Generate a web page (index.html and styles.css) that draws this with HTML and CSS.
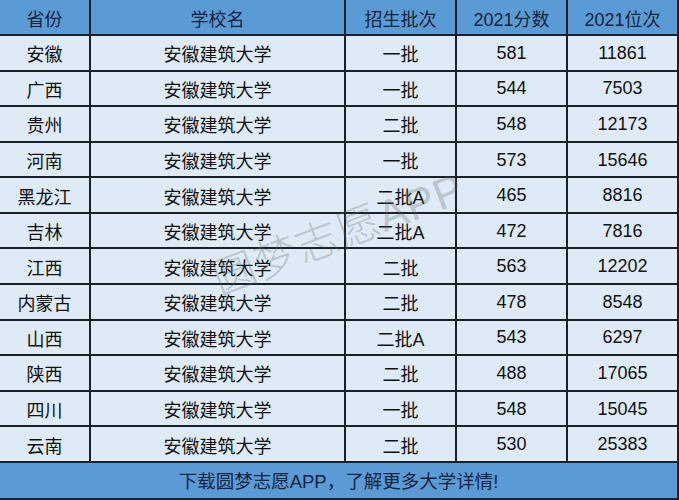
FILE: index.html
```html
<!DOCTYPE html>
<html lang="zh-CN">
<head>
<meta charset="utf-8">
<title>安徽建筑大学 2021 录取分数</title>
<link rel="stylesheet" href="styles.css">
</head>
<body>
<div class="sheet">
  <div class="cell head">省份</div>
  <div class="cell head">学校名</div>
  <div class="cell head">招生批次</div>
  <div class="cell head">2021分数</div>
  <div class="cell head">2021位次</div>

  <div class="cell">安徽</div><div class="cell">安徽建筑大学</div><div class="cell">一批</div><div class="cell">581</div><div class="cell">11861</div>
  <div class="cell">广西</div><div class="cell">安徽建筑大学</div><div class="cell">一批</div><div class="cell">544</div><div class="cell">7503</div>
  <div class="cell">贵州</div><div class="cell">安徽建筑大学</div><div class="cell">二批</div><div class="cell">548</div><div class="cell">12173</div>
  <div class="cell">河南</div><div class="cell">安徽建筑大学</div><div class="cell">一批</div><div class="cell">573</div><div class="cell">15646</div>
  <div class="cell">黑龙江</div><div class="cell">安徽建筑大学</div><div class="cell">二批A</div><div class="cell">465</div><div class="cell">8816</div>
  <div class="cell">吉林</div><div class="cell">安徽建筑大学</div><div class="cell">二批A</div><div class="cell">472</div><div class="cell">7816</div>
  <div class="cell">江西</div><div class="cell">安徽建筑大学</div><div class="cell">二批</div><div class="cell">563</div><div class="cell">12202</div>
  <div class="cell">内蒙古</div><div class="cell">安徽建筑大学</div><div class="cell">二批</div><div class="cell">478</div><div class="cell">8548</div>
  <div class="cell">山西</div><div class="cell">安徽建筑大学</div><div class="cell">二批A</div><div class="cell">543</div><div class="cell">6297</div>
  <div class="cell">陕西</div><div class="cell">安徽建筑大学</div><div class="cell">二批</div><div class="cell">488</div><div class="cell">17065</div>
  <div class="cell">四川</div><div class="cell">安徽建筑大学</div><div class="cell">一批</div><div class="cell">548</div><div class="cell">15045</div>
  <div class="cell">云南</div><div class="cell">安徽建筑大学</div><div class="cell">二批</div><div class="cell">530</div><div class="cell">25383</div>

  <div class="footer">下载圆梦志愿APP，了解更多大学详情!</div>

  <div class="watermark">圆梦志愿APP</div>
</div>
</body>
</html>
```

FILE: styles.css
```css
html, body {
  margin: 0;
  padding: 0;
  background: #deebf7;
}

.sheet {
  position: relative;
  width: 679px;
  height: 500px;
  display: grid;
  grid-template-columns: 91px 255px 111px 111px 1fr;
  grid-template-rows: 36px repeat(12, 35.58px) 1fr;
  font-family: "Liberation Sans", "Noto Sans CJK SC", sans-serif;
  font-size: 18px;
  color: #111111;
  overflow: hidden;
}

.cell {
  box-sizing: border-box;
  display: flex;
  align-items: center;
  justify-content: center;
  background: #deebf7;
  border-right: 2px solid #1b1f27;
  border-bottom: 2px solid #1b1f27;
  padding-top: 1px;
}

.head {
  background: #5b9bd5;
  color: #13243d;
}

.footer {
  grid-column: 1 / -1;
  box-sizing: border-box;
  display: flex;
  align-items: center;
  justify-content: center;
  background: #5b9bd5;
  color: #13243d;
  font-size: 18.5px;
  border-right: 2px solid #1b1f27;
  border-bottom: 2px solid #1b1f27;
}

.watermark {
  position: absolute;
  left: 337px;
  top: 230px;
  transform: translate(-50%, -50%) rotate(-21deg);
  font-size: 43px;
  font-weight: 300;
  color: rgba(100, 100, 100, 0.3);
  white-space: nowrap;
  pointer-events: none;
  letter-spacing: 1px;
}
```
